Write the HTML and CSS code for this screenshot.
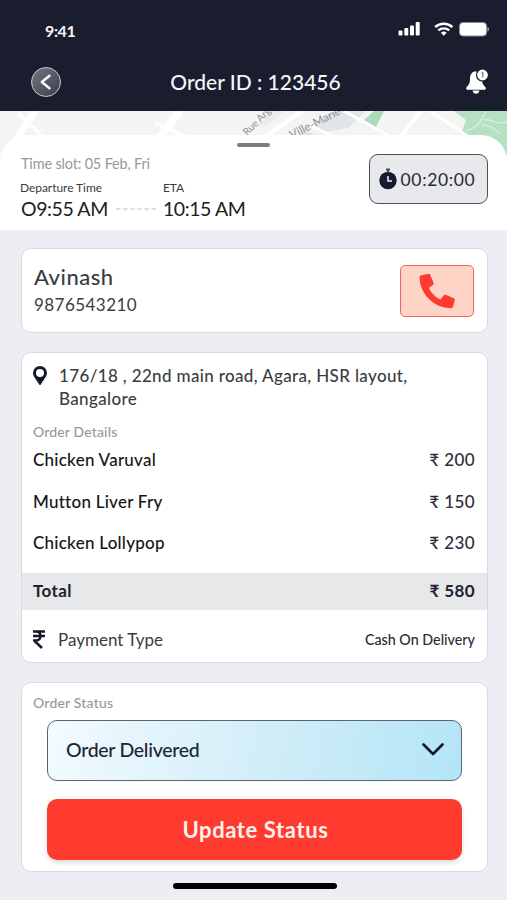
FILE: index.html
```html
<!DOCTYPE html>
<html lang="en">
<head>
	<meta charset="utf-8">
	<title>Order ID : 123456</title>
	<link rel="stylesheet" href="styles.css">
</head>
<body>
	<header class="top">
		<div class="status-bar">
			<span class="clock">9:41</span>
			<div class="status-icons">
				<svg class="signal" width="22" height="14" viewBox="0 0 22 14" fill="#fff">
					<rect x="0.5" y="8.5" width="4" height="5" rx="1"/>
					<rect x="6.3" y="6" width="4" height="7.5" rx="1"/>
					<rect x="12" y="3.5" width="4" height="10" rx="1"/>
					<rect x="17.7" y="0" width="4" height="13.5" rx="1"/>
				</svg>
				<svg class="wifi" width="20" height="14" viewBox="0 0 20 14">
					<path d="M1.2 5.2a12.6 12.6 0 0 1 17.2 0" fill="none" stroke="#fff" stroke-width="2.5"/>
					<path d="M4.4 8.4a8.2 8.2 0 0 1 10.8 0" fill="none" stroke="#fff" stroke-width="2.4"/>
					<path d="M6.9 10.7a4.4 4.4 0 0 1 5.8 0L9.8 13.7z" fill="#fff"/>
				</svg>
				<svg class="battery" width="31" height="15" viewBox="0 0 31 15">
					<rect x="0.5" y="0.5" width="27" height="13.5" rx="3.5" fill="#fff" stroke="#8b8d98"/>
					<path d="M28.500 5v4.600c1.800-.7 1.800-3.900 0-4.600z" fill="#d0d1d8"/>
				</svg>
			</div>
		</div>
		<div class="nav">
			<button class="back">
				<svg width="30" height="30" viewBox="0 0 30 30" fill="none" stroke="#fff" stroke-width="2.4" stroke-linecap="round" stroke-linejoin="round">
					<path d="M18.500 8.800 10.800 15l7.700 6.200"/>
				</svg>
			</button>
			<h1>Order ID : 123456</h1>
			<svg class="bell" width="24" height="26" viewBox="0 0 24 26">
				<path d="M11 2.200C6.500 2.200 5 6 5 9.800c0 4.600-1.300 6.400-3.300 8.300-1.100 1.100-.6 2.700.8 2.700h17c1.400 0 1.900-1.600.8-2.700-2-1.900-3.300-3.700-3.300-8.300z" fill="#fff"/>
				<path d="M7.600 21.500h6.800c-.3 2.200-1.700 3.200-3.400 3.200s-3.100-1-3.400-3.200z" fill="#fff"/>
				<circle cx="17.500" cy="6" r="6" fill="#fff" stroke="#1a1d2e" stroke-width="1.200"/>
				<path d="M16.500 4.200l1.200-.8v5.200" fill="none" stroke="#85868f" stroke-width="1.300"/>
			</svg>
		</div>
	</header>

	<section class="trip">
		<svg class="map" width="507" height="60" viewBox="0 0 507 60">
			<rect width="507" height="60" fill="#f4f4f3"/>
			<path d="M336 0h30l-18 17-22 4-14-8z" fill="#e1e5e8"/>
			<path d="M272 0h14l-16 12-14 4z" fill="#eaebeb"/>
			<path d="M304 18l13 7-6 7h-18z" fill="#e1e5e8"/>
			<path d="M374 0h10l-8 16-12-7z" fill="#abdcb9"/>
			<path d="M454 0h53v44l-45-23 4-12z" fill="#b5e0c1"/>
			<path d="M486 0c-6 14-12 18-20 20M483 9c8-3 10 6 24 2M482 14c10 0 12 5 18 8" fill="none" stroke="#d8efde" stroke-width="1.500"/>
			<g stroke="#fff" fill="none">
				<path d="M35 0L10 38" stroke-width="7"/>
				<path d="M18 2l26 25" stroke-width="3"/>
				<path d="M180 0l-22 28" stroke-width="8"/>
				<path d="M155 12l36 16" stroke-width="4"/>
				<path d="M421 0l-24 30" stroke-width="4"/>
				<path d="M344 0l45 25M310 14l24 12M430 0l45 30" stroke-width="3"/>
				<path d="M302 0l-46 32" stroke-width="4"/>
			</g>
			<text class="street rue" transform="translate(247 25) rotate(-45)">Rue Argy</text>
			<text class="street" transform="translate(292 28) rotate(-27)">Ville-Marie</text>
		</svg>
		<div class="sheet">
			<div class="handle"></div>
			<div class="sheet-row">
				<div class="times">
					<p class="slot">Time slot: 05 Feb, Fri</p>
					<div class="legs">
						<div class="leg">
							<p class="label departure">Departure Time</p>
							<p class="time">O9:55 AM</p>
						</div>
						<svg class="dashes" width="40" height="2" viewBox="0 0 40 2"><path d="M0 1h40" stroke="#d3d3d6" stroke-width="1.500" stroke-dasharray="4.500 2.600"/></svg>
						<div class="leg">
							<p class="label">ETA</p>
							<p class="time">10:15 AM</p>
						</div>
					</div>
				</div>
				<div class="timer">
					<svg width="18" height="22" viewBox="0 0 18 22">
						<circle cx="9" cy="12.500" r="8.700" fill="#171a30"/>
						<path d="M7 1.500h4M9 1.500v3" stroke="#4b4d5a" stroke-width="2"/>
						<path d="M9 8v5h4" fill="none" stroke="#e9eaec" stroke-width="1.600"/>
					</svg>
					<span>00:20:00</span>
				</div>
			</div>
		</div>
	</section>

	<main>
		<section class="card customer">
			<div>
				<h2>Avinash</h2>
				<p class="phone">9876543210</p>
			</div>
			<button class="call">
				<svg width="36" height="36" viewBox="0 0 36 36" fill="#ff3a2f">
					<path d="M1.900 2.400 9.300.7c.8-.2 1.600.2 1.900 1l3.400 8c.3.7.1 1.500-.5 2l-4.200 3.400c2.500 5.300 6.300 9.100 11.500 11.400l3.400-4.200c.5-.6 1.300-.8 2-.5l8 3.500c.7.3 1.100 1.100.9 1.900L34 34c-.2.700-.8 1.200-1.600 1.200C14.800 35.200.600 21 .600 4c0-.8.600-1.500 1.300-1.600z"/>
				</svg>
			</button>
		</section>

		<section class="card order">
			<div class="address">
				<svg width="14" height="19" viewBox="0 0 14 19">
					<path fill-rule="evenodd" d="M7 0a7 7 0 0 0-7 7c0 3.500 3 5.700 6 11.300.4.800 1.600.8 2 0C11 12.700 14 10.500 14 7a7 7 0 0 0-7-7zm0 2.900a4 4 0 1 1 0 8 4 4 0 0 1 0-8z" fill="#15182b"/>
				</svg>
				<p>176/18 , 22nd main road, Agara, HSR layout,<br>Bangalore</p>
			</div>
			<h3>Order Details</h3>
			<ul class="items">
				<li><span>Chicken Varuval</span><span class="price">₹ 200</span></li>
				<li><span>Mutton Liver Fry</span><span class="price">₹ 150</span></li>
				<li><span>Chicken Lollypop</span><span class="price">₹ 230</span></li>
			</ul>
			<div class="total"><span>Total</span><span>₹ 580</span></div>
			<div class="payment">
				<svg width="12" height="19" viewBox="0 0 12 19" fill="none" stroke="#15182b" stroke-width="2.500">
					<path d="M0 1.500h12M0 6h12M.500 1.500h2.500c6 0 6 9 0 9H1l8 7.500"/>
				</svg>
				<span class="pay-label">Payment Type</span>
				<span class="pay-value">Cash On Delivery</span>
			</div>
		</section>

		<section class="card status">
			<h3>Order Status</h3>
			<div class="select">
				<span>Order Delivered</span>
				<svg width="22" height="13" viewBox="0 0 22 13" fill="none" stroke="#11142b" stroke-width="2.600" stroke-linecap="round" stroke-linejoin="round">
					<path d="M1.500 1.500 11 11l9.500-9.500"/>
				</svg>
			</div>
			<button class="update">Update Status</button>
		</section>
	</main>
	<div class="home-bar"></div>
</body>
</html>
```
FILE: styles.css
```css
* {
    box-sizing: border-box;
    margin: 0;
    padding: 0;
}
body {
    width: 507px;
    height: 900px;
    overflow: hidden;
    background-color: #eeedf3;
    font-family: Lato, "Open Sans", sans-serif;
    font-variant-ligatures: none;
    color: #3c3c3e;
}
button {
    border: none;
    font-family: inherit;
}
.top {
    height: 111px;
    background-color: #1a1d2e;
    color: #f4f5fa;
}
.status-bar {
    height: 60px;
    padding: 0 17px 0 45px;
    display: flex;
    justify-content: space-between;
}
.clock {
    margin-top: 21px;
    font-size: 16px;
    line-height: 20px;
    font-weight: 700;
    letter-spacing: -0.4px;
}
.status-icons {
    display: flex;
    height: 15px;
    margin-top: 22px;
}
.wifi {
    margin-left: 14px;
}
.battery {
    margin-left: 5px;
}
.nav {
    height: 43px;
    padding: 0 18px 0 31px;
    display: flex;
    justify-content: space-between;
    align-items: center;
}
.back {
    width: 30px;
    height: 30px;
    border-radius: 50%;
    border: 1.5px solid #c9cad2;
    background: linear-gradient(135deg, #737580, #3c3e4c);
    display: flex;
    align-items: center;
    justify-content: center;
}
.back svg {
    flex: none;
}
.nav h1 {
    margin: 0 15px 1px 0;
    font-size: 21px;
    font-weight: 500;
}
.trip {
    height: 119px;
    position: relative;
}
.map {
    position: absolute;
    top: 0;
    left: 0;
}
.street {
    font-size: 11.5px;
    fill: #8f9092;
}
.rue {
    font-size: 10px;
}
.sheet {
    position: relative;
    top: 24px;
    height: 95px;
    padding-top: 8px;
    border-radius: 26px 26px 0 0;
    background-color: #fff;
}
.handle {
    width: 33px;
    height: 4px;
    margin: 0 auto;
    border-radius: 2px;
    background-color: #7c7c7d;
}
.sheet-row {
    display: flex;
    justify-content: space-between;
    padding: 7px 19px 0 21px;
}
.slot {
    font-size: 14.5px;
    line-height: 20px;
    color: #98989b;
    letter-spacing: -0.18px;
}
.legs {
    display: flex;
}
.label {
    margin-top: 6px;
    font-size: 12px;
    line-height: 16px;
    letter-spacing: -0.05px;
}
.departure {
    margin-left: -1px;
}
.time {
    margin-top: 1px;
    font-size: 19.5px;
    line-height: 24px;
    letter-spacing: -0.4px;
    color: #202022;
}
.dashes {
    margin: 34px 7px 0 8px;
}
.timer {
    width: 119px;
    height: 50px;
    padding-right: 3px;
    border: 1.5px solid #4f5056;
    border-radius: 9px;
    background-color: #e8e9ec;
    display: flex;
    align-items: center;
    justify-content: center;
    gap: 4px;
    font-size: 17.5px;
    letter-spacing: 0.65px;
    color: #2a2b31;
}
main {
    padding: 18px 19px 0 21px;
    display: flex;
    flex-direction: column;
    gap: 19px;
}
.card {
    border: 1.5px solid #d9d9de;
    border-radius: 10px;
    background-color: #fff;
}
.customer {
    height: 85px;
    padding: 0 13px 0 12px;
    display: flex;
    justify-content: space-between;
    align-items: center;
}
.customer h2 {
    font-size: 22px;
    line-height: 28px;
    font-weight: 500;
    letter-spacing: 0.5px;
}
.phone {
    font-size: 17px;
    line-height: 27px;
    letter-spacing: 0.45px;
}
.call {
    width: 74px;
    height: 52px;
    border: 1.5px solid #f4645c;
    border-radius: 5px;
    background-color: #ffd3c6;
    display: flex;
    align-items: center;
    justify-content: center;
}
.order {
    height: 311px;
}
.address {
    display: flex;
    gap: 12px;
    padding: 11px 0 0 11px;
}
.address svg {
    margin-top: 2px;
}
.address p {
    font-size: 17px;
    line-height: 23px;
    font-weight: 500;
    letter-spacing: 0.35px;
}
.card h3 {
    margin-left: 11px;
    font-size: 14px;
    line-height: 20px;
    font-weight: 500;
    letter-spacing: 0.15px;
    color: #98989b;
}
.order h3 {
    margin-top: 12px;
}
.items {
    list-style: none;
    margin: -3px 0 9px;
}
.items li {
    height: 41.5px;
    padding: 0 12px 0 11px;
    display: flex;
    justify-content: space-between;
    align-items: center;
    font-size: 17px;
    font-weight: 500;
    letter-spacing: 0.25px;
    color: #151517;
}
.items .price {
    color: #2b2d38;
    letter-spacing: 0.4px;
}
.total {
    height: 37px;
    padding: 0 12px 1px 11px;
    background-color: #e6e8ea;
    display: flex;
    justify-content: space-between;
    align-items: center;
    font-size: 17px;
    font-weight: 700;
    letter-spacing: 0.4px;
    color: #20222f;
}
.payment {
    height: 59px;
    padding: 0 12px 0 11px;
    display: flex;
    align-items: center;
}
.pay-label {
    margin-left: 13px;
    font-size: 17px;
}
.pay-value {
    margin-left: auto;
    font-size: 14.3px;
    font-weight: 500;
    color: #2b2d38;
}
.status {
    height: 190px;
}
.status h3 {
    margin-top: 10px;
    letter-spacing: 0.2px;
}
.select {
    height: 61px;
    margin: 7px 25px 0 25px;
    padding: 0 17px 2px 18px;
    border: 1.5px solid #5b6470;
    border-radius: 10px;
    background: linear-gradient(100deg, #f3fbff, #d3eef8 50%, #b3e5f7);
    display: flex;
    justify-content: space-between;
    align-items: center;
    font-size: 19.5px;
    font-weight: 500;
    letter-spacing: -0.3px;
    color: #1c2733;
}
.update {
    display: block;
    width: 415px;
    height: 61px;
    margin: 18px 0 0 25px;
    padding: 0 0 1px 2px;
    border-radius: 10px;
    background-color: #ff3b2f;
    box-shadow: 0 3px 4px rgba(0, 0, 0, 0.13);
    font-size: 22px;
    font-weight: 700;
    letter-spacing: 0.6px;
    color: #fff0ee;
}
.home-bar {
    width: 164px;
    height: 6px;
    margin: 11px 0 0 173px;
    border-radius: 3px;
    background-color: #000;
}
```
